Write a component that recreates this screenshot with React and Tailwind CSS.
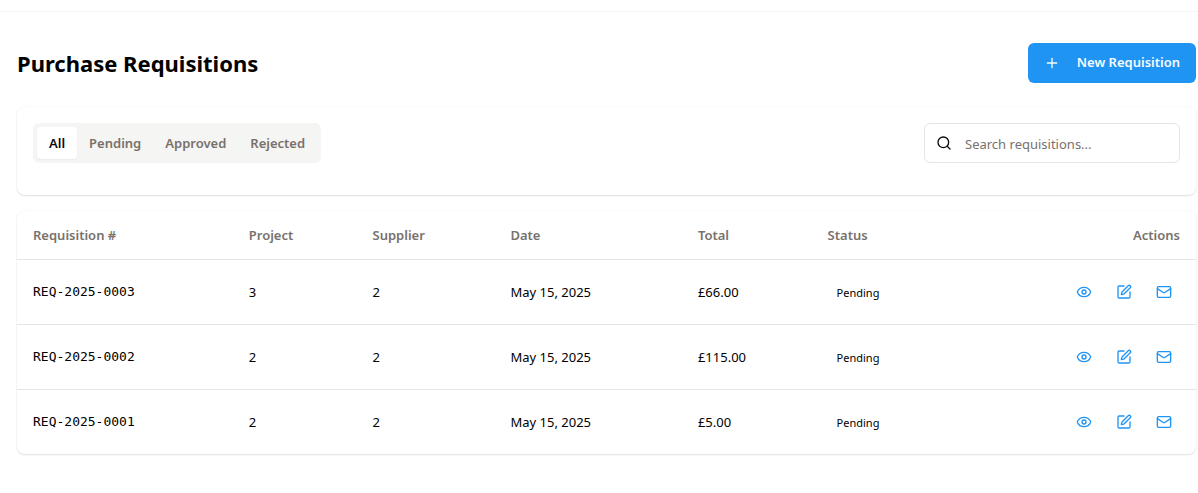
import { Eye, Mail, Plus, Search, SquarePen } from "lucide-react";

const tabs = ["All", "Pending", "Approved", "Rejected"];

const requisitions = [
  { number: "REQ-2025-0003", project: "3", supplier: "2", date: "May 15, 2025", total: "£66.00", status: "Pending" },
  { number: "REQ-2025-0002", project: "2", supplier: "2", date: "May 15, 2025", total: "£115.00", status: "Pending" },
  { number: "REQ-2025-0001", project: "2", supplier: "2", date: "May 15, 2025", total: "£5.00", status: "Pending" },
];

function IconButton({ icon: Icon, label }) {
  return (
    <button type="button" aria-label={label} className="flex size-8 items-center justify-center rounded-md text-[#2094f3]">
      <Icon size={16} />
    </button>
  );
}

function Header() {
  return (
    <div className="flex items-center justify-between">
      <h1 className="text-[22px] leading-8 font-bold text-black">Purchase Requisitions</h1>
      <button
        type="button"
        className="flex h-10 items-center gap-[17px] rounded-md bg-[#2094f3] px-4 text-[13px] font-semibold text-[#f7fbff]"
      >
        <Plus size={16} />
        New Requisition
      </button>
    </div>
  );
}

function Filters() {
  return (
    <section className="flex items-start justify-between rounded-lg bg-white px-4 pt-4 pb-8 shadow-[0_0_2px_rgba(0,0,0,0.05),0_1px_2px_rgba(0,0,0,0.12)]">
      <div role="tablist" className="flex h-10 items-center rounded-md bg-[#f5f5f4] p-1 text-[13px] font-semibold text-[#78716c]">
        {tabs.map((tab, i) => (
          <button
            key={tab}
            type="button"
            role="tab"
            aria-selected={i === 0}
            className={
              i === 0
                ? "h-8 rounded-sm bg-white px-3 pt-px text-[#0c0a09] shadow-xs"
                : "h-8 rounded-sm px-3 pt-px"
            }
          >
            {tab}
          </button>
        ))}
      </div>
      <label className="flex h-10 w-64 items-center gap-[13px] rounded-md border border-[#e5e5e5] px-[11px]">
        <Search size={16} className="shrink-0" />
        <input
          type="search"
          aria-label="Search requisitions"
          placeholder="Search requisitions..."
          className="w-full min-w-0 bg-transparent pt-px text-[13px] leading-5 outline-none placeholder:text-[#78716c]"
        />
      </label>
    </section>
  );
}

function RequisitionTable() {
  return (
    <section className="rounded-lg bg-white shadow-[0_0_2px_rgba(0,0,0,0.05),0_1px_2px_rgba(0,0,0,0.12)]">
      <table className="w-full table-fixed text-left text-[13px] leading-5">
        <colgroup>
          <col className="w-[18.3%]" />
          <col className="w-[10.5%]" />
          <col className="w-[11.7%]" />
          <col className="w-[15.9%]" />
          <col className="w-[11%]" />
          <col className="w-[12%]" />
          <col />
        </colgroup>
        <thead>
          <tr className="h-12 border-b border-[#e5e5e5] text-[#78716c]">
            <th className="px-4 font-semibold">Requisition #</th>
            <th className="px-4 font-semibold">Project</th>
            <th className="px-4 font-semibold">Supplier</th>
            <th className="px-4 font-semibold">Date</th>
            <th className="px-4 font-semibold">Total</th>
            <th className="px-4 font-semibold">Status</th>
            <th className="px-4 text-right font-semibold">Actions</th>
          </tr>
        </thead>
        <tbody>
          {requisitions.map((r) => (
            <tr key={r.number} className="border-b border-[#e5e5e5] text-black last:border-b-0">
              <td className="p-4 font-['DejaVu_Sans_Mono',monospace]">{r.number}</td>
              <td className="p-4">{r.project}</td>
              <td className="p-4">{r.supplier}</td>
              <td className="p-4">{r.date}</td>
              <td className="p-4">{r.total}</td>
              <td className="p-4">
                <span className="inline-flex rounded-full border border-transparent px-2 text-[11px] leading-4">{r.status}</span>
              </td>
              <td className="p-4">
                <div className="flex justify-end gap-2">
                  <IconButton icon={Eye} label={`View ${r.number}`} />
                  <IconButton icon={SquarePen} label={`Edit ${r.number}`} />
                  <IconButton icon={Mail} label={`Email ${r.number}`} />
                </div>
              </td>
            </tr>
          ))}
        </tbody>
      </table>
    </section>
  );
}

export default function App() {
  return (
    <div className="min-h-screen bg-white font-['Noto_Sans','Open_Sans',sans-serif] text-[#0c0a09]">
      <div className="h-3 border-b border-[#f5f5f5]" />
      <main className="pt-[31px] pr-[2px] pb-8 pl-[17px]">
        <Header />
        <div className="mt-6 flex flex-col gap-4">
          <Filters />
          <RequisitionTable />
        </div>
      </main>
    </div>
  );
}
